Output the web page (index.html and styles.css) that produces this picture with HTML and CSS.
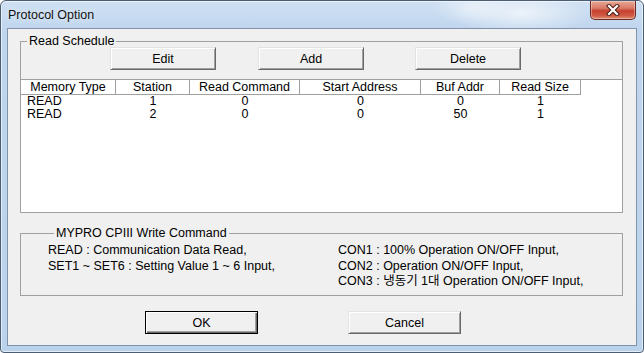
FILE: index.html
```html
<!DOCTYPE html>
<html lang="ko">
<head>
  <meta charset="UTF-8" />
  <meta name="viewport" content="width=device-width, initial-scale=1.0">
  <title>Protocol Option</title>
  <link rel="stylesheet" href="styles.css">
</head>
<body>

  <div class="window">
    <div class="titlebar">
      <span class="title">Protocol Option</span>
      <button class="close" title="닫기">
        <svg width="16" height="12" viewBox="0 0 16 12">
          <path d="M4 2 L12 10 M12 2 L4 10" stroke="#4a1d14" stroke-width="4.2" stroke-linecap="square" fill="none" />
          <path d="M4 2 L12 10 M12 2 L4 10" stroke="#fff" stroke-width="2.2" stroke-linecap="square" fill="none" />
        </svg>
      </button>
    </div>

    <div class="client">
      <fieldset class="group group-read">
        <legend>Read Schedule</legend>

        <div class="toolbar">
          <button class="btn btn-tool">Edit</button>
          <button class="btn btn-tool btn-add">Add</button>
          <button class="btn btn-tool btn-delete">Delete</button>
        </div>

        <div class="list">
          <div class="list-head">
            <div class="th">Memory Type</div>
            <div class="th">Station</div>
            <div class="th">Read Command</div>
            <div class="th">Start Address</div>
            <div class="th">Buf Addr</div>
            <div class="th">Read Size</div>
            <div class="th th-fill"></div>
          </div>
          <div id="rows"></div>
        </div>
      </fieldset>

      <fieldset class="group group-write">
        <legend>MYPRO CPIII Write Command</legend>
        <div class="cmds">
          <span>READ : Communication Data Read,</span>
          <span>CON1 : 100% Operation ON/OFF Input,</span>
          <span>SET1 ~ SET6 : Setting Value 1 ~ 6 Input,</span>
          <span>CON2 : Operation ON/OFF Input,</span>
          <span></span>
          <span>CON3 : 냉동기 1대 Operation ON/OFF Input,</span>
        </div>
      </fieldset>

      <div class="actions">
        <button class="btn btn-dlg btn-default">OK</button>
        <button class="btn btn-dlg">Cancel</button>
      </div>
    </div>
  </div>

  <script>
    const schedule = [
      { type: "READ", station: 1, cmd: 0, start: 0, buf: 0, size: 1 },
      { type: "READ", station: 2, cmd: 0, start: 0, buf: 50, size: 1 }
    ];

    const rows = document.getElementById("rows");
    schedule.forEach(r => {
      rows.innerHTML += `
        <div class="list-row">
          <div class="td td-type">${r.type}</div>
          <div class="td">${r.station}</div>
          <div class="td">${r.cmd}</div>
          <div class="td">${r.start}</div>
          <div class="td">${r.buf}</div>
          <div class="td">${r.size}</div>
          <div class="td"></div>
        </div>
      `;
    });
  </script>
</body>
</html>
```

FILE: styles.css
```css
:root {
  --face: #f0f0f0;
  --line: #a0a0a0;
  --dark: #696969;
  --frame: #bad2eb;
}

* {
  box-sizing: border-box;
}

body {
  margin: 0;
  font-family: "Liberation Sans", "Noto Sans CJK KR", sans-serif;
  font-size: 12.5px;
  color: #000;
  background: #fff;
}

.window {
  width: 644px;
  height: 353px;
  display: flex;
  flex-direction: column;
  padding: 0 6px 6px;
  border: 1px solid #4b5d72;
  border-radius: 6px 6px 4px 4px;
  background:
    radial-gradient(ellipse 70px 22px at 520px 12px, rgba(255,255,255,0.65), rgba(255,255,255,0)),
    radial-gradient(ellipse 40px 18px at 470px 6px, rgba(255,255,255,0.45), rgba(255,255,255,0)),
    linear-gradient(to bottom, #cfe0f3 0, #c0d6ee 28px, var(--frame) 100%);
  box-shadow: inset 0 0 0 1px rgba(255,255,255,0.6);
}

.titlebar {
  height: 27px;
  display: flex;
  align-items: flex-start;
}

.title {
  padding: 7px 0 0 1px;
  line-height: 15px;
  color: #111;
  text-shadow: 0 0 6px rgba(255,255,255,0.9);
}

.close {
  margin: 0 1px 0 auto;
  width: 46px;
  height: 19px;
  padding: 0;
  display: flex;
  align-items: center;
  justify-content: center;
  border: 1px solid #6b2a20;
  border-top: none;
  border-radius: 0 0 5px 5px;
  background: linear-gradient(to bottom, #e7a897 0, #d97a66 40%, #c6402f 55%, #cf5a43 80%, #e08a70 100%);
  box-shadow: inset 0 0 0 1px rgba(255,255,255,0.35);
}

.client {
  flex: 1;
  display: flex;
  flex-direction: column;
  border: 1px solid #8193a9;
  background: var(--face);
}

.group {
  margin: 0 13px 0 12px;
  padding: 0;
  min-width: 0;
  border: 1px solid var(--line);
}

.group legend {
  margin-left: 6px;
  padding: 0 2px;
  line-height: 13px;
}

.group-read {
  margin-top: 6px;
}

.group-write {
  margin-top: 14px;
  padding: 3px 0 5.5px 27px;
}

.toolbar {
  display: flex;
  margin-top: -1px;
  padding-left: 89px;
}

.btn {
  padding: 0;
  height: 23px;
  font-family: inherit;
  font-size: 12.5px;
  color: #000;
  background: var(--face);
  border: 1px solid;
  border-color: #e3e3e3 var(--dark) var(--dark) #e3e3e3;
  box-shadow: inset 1px 1px 0 #fff, inset -1px -1px 0 var(--line);
}

.btn-tool {
  width: 106px;
}

.btn-add {
  margin-left: 42px;
}

.btn-delete {
  margin-left: 51px;
}

.btn-dlg {
  width: 113px;
}

.btn-default {
  border-color: #000;
  box-shadow: inset 1px 1px 0 #fff, inset -1px -1px 0 var(--dark), inset -2px -2px 0 var(--line);
}

.list {
  margin-top: 9px;
  height: 133px;
  background: #fff;
  border-top: 1px solid var(--line);
}

.list-head,
.list-row {
  display: grid;
  grid-template-columns: 95px 74px 110px 121px 79px 81px 1fr;
}

.th {
  line-height: 14px;
  text-align: center;
  white-space: nowrap;
  border-right: 1px solid var(--line);
  border-bottom: 1px solid var(--line);
}

.th-fill {
  border: none;
}

.td {
  line-height: 13px;
  text-align: center;
  white-space: nowrap;
}

.td-type {
  text-align: left;
  padding-left: 6px;
}

.cmds {
  display: grid;
  grid-template-columns: 290px auto;
  line-height: 15.5px;
  white-space: nowrap;
}

.actions {
  display: flex;
  gap: 90px;
  margin-top: 15px;
  padding-left: 137px;
}
```
